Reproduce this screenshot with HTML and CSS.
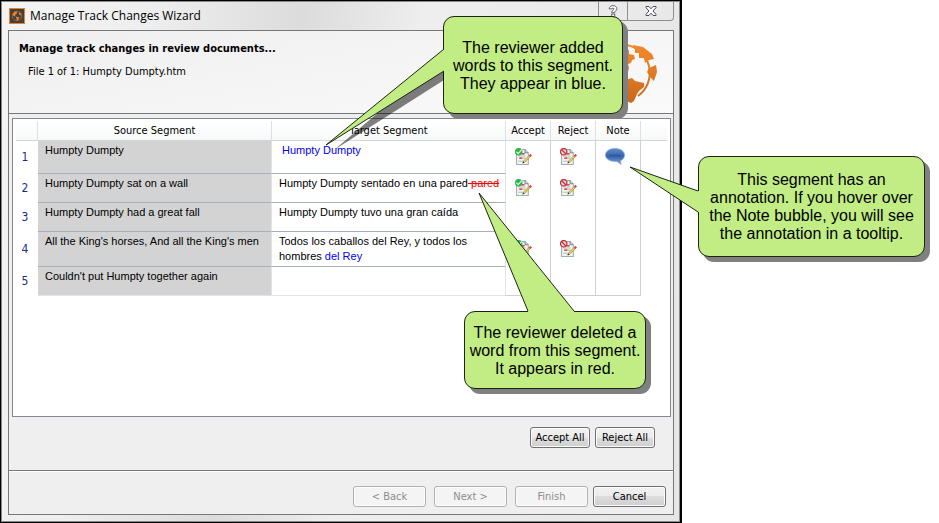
FILE: index.html
```html
<!DOCTYPE html>
<html lang="en">
<head>
<meta charset="utf-8">
<title>Manage Track Changes Wizard</title>
<link rel="stylesheet" href="styles.css">
</head>
<body>
<svg class="defs" aria-hidden="true">
  <defs>
    <linearGradient id="orange" gradientUnits="userSpaceOnUse" x1="0" y1="0" x2="0" y2="60"><stop offset="0" stop-color="#f58a2b"/><stop offset="1" stop-color="#c9691c"/></linearGradient>
    <linearGradient id="blue" x1="0" y1="0" x2="0" y2="1"><stop offset="0" stop-color="#5f8cc9"/><stop offset=".5" stop-color="#3764ad"/><stop offset="1" stop-color="#7ba3dc"/></linearGradient>
    <symbol id="doc" viewBox="0 0 16 16">
      <path d="M1.500 1.500h8l3 3v11h-11z" fill="#f1f6f6" stroke="#9eaeb1"/>
      <path d="M9.500 1.500v3h3" fill="#cfd9da" stroke="#7b8b8e"/>
      <path d="M6 5.500h3M4 9.500h3" stroke="#e80d0d"/>
      <path d="M7 9.500h3M3 7.500h7M3 12.500h5" stroke="#b3bfc0"/>
      <path d="M7.500 14l.6-1.800 5-5 1.200 1.200-5 5z" fill="#f1cf4a" stroke="#8b7226" stroke-width=".5"/>
      <path d="M13 7l1.400-1.500 1.600 1.500-1.500 1.500z" fill="#d7474c"/>
      <path d="M7 14.500l.6-1.700 1.100 1.100z" fill="#222"/>
    </symbol>
    <symbol id="accept" viewBox="0 0 16 16">
      <use href="#doc"/>
      <circle cx="3.500" cy="3.500" r="3.500" fill="#2cb44c"/>
      <path d="M1.300 3.600l1.700 1.700 3.500-4" fill="none" stroke="#d9f7dd" stroke-width="1.200"/>
    </symbol>
    <symbol id="reject" viewBox="0 0 16 16">
      <use href="#doc"/>
      <circle cx="3.500" cy="3.500" r="3" fill="#f7dede" stroke="#c03339" stroke-width="1.200"/>
      <path d="M1.400 1.400l4.200 4.200" stroke="#c03339" stroke-width="1.200"/>
    </symbol>
  </defs>
</svg>
<main class="stage">
  <section class="window">
    <header class="titlebar">
      <svg class="app-icon" viewBox="0 0 16 16" aria-hidden="true">
        <rect x=".5" y=".5" width="15" height="15" fill="#414042" stroke="#f08020"/>
        <circle cx="8" cy="8" r="4.700" fill="none" stroke="#b9661f" stroke-width=".8"/>
        <path d="M3.500 6l2-2.500 3 .5-1 2-1.500 1 .5 1.500-2-.5zM10 4l2.500 2-.5 1.500-2-1zM7 8.500l3.500 1-1 2-1.500 1.500-.5-2z" fill="#f08020"/>
      </svg>
      <h1>Manage Track Changes Wizard</h1>
      <div class="captions">
        <button class="cap-help" aria-label="Help"><svg viewBox="0 0 12 14"><path d="M1.500 4.500c0-5 9-5 9 0 0 2-2.500 2.500-2.500 4.500H4.500c0-3 2.500-3 2.500-4.500 0-1.300-2-1.300-2 0zM4.500 10.500H8v3H4.500z" fill="#fff" stroke="#4b4d58"/></svg></button>
        <button class="cap-close" aria-label="Close"><svg viewBox="0 0 12 12"><path d="M1 1.500h3l2 2.300 2-2.300h3v1.200L8 6l3 3.300v1.200H8L6 8.200 4 10.500H1V9.300L4 6 1 2.700z" fill="#fff" stroke="#4b4d58"/></svg></button>
      </div>
    </header>
    <div class="client">
      <div class="banner">
        <div>
          <h2>Manage track changes in review documents...</h2>
          <p>File 1 of 1: Humpty Dumpty.htm</p>
        </div>
        <svg class="globe" viewBox="0 0 60 60" aria-hidden="true">
          <path d="M29 2A28.500 28.500 0 0 1 40 53" fill="none" stroke="url(#orange)" stroke-width="2"/>
          <path d="M30 2A28.500 28.500 0 0 0 26 58" fill="none" stroke="url(#orange)" stroke-width="2"/>
          <path d="M8 14L18 6l13 1v4l5 1 1 4-3 1-1 3-3 1 1 4-1 4-3 2-9-1-8-8z" fill="url(#orange)"/>
          <path d="M35 2l10 2 9 7 2 5-5 1-4 3-1-5h-5v-5h-4V6z" fill="url(#orange)"/>
          <path d="M51 25l7-3 1 7-3 9-4-4-3-5z" fill="url(#orange)"/>
          <path d="M27 37l7-2 3 3 9 2v4l-5 4-2 3-3 7-3 2-5-2 2-6-4-7z" fill="url(#orange)"/>
        </svg>
      </div>
      <div class="body">
        <div class="grid-panel">
          <table>
            <colgroup><col class="c-num"><col><col><col class="c-act"><col class="c-act"><col class="c-act"><col class="c-rest"></colgroup>
            <thead>
              <tr><th></th><th>Source Segment</th><th>Target Segment</th><th>Accept</th><th>Reject</th><th>Note</th><th></th></tr>
            </thead>
            <tbody>
              <tr class="tall">
                <th>1</th><td class="src">Humpty Dumpty</td><td class="tgt"><ins class="indent">Humpty Dumpty</ins></td>
                <td class="act"><svg><use href="#accept"/></svg></td><td class="act"><svg><use href="#reject"/></svg></td>
                <td class="act"><svg class="note" viewBox="0 0 20 17"><path d="M10 .5c5.500 0 9.500 2.800 9.500 6.500 0 2.600-1.500 4.700-4 5.800l.5 3.700-4-3.100C5 13.800.5 11 .5 7 .5 3.300 4.500.5 10 .5z" fill="url(#blue)" stroke="#87a6d3" stroke-width=".8"/><path d="M4 6.500h12v2H4z" fill="#2c5296" opacity=".6"/></svg></td><td></td>
              </tr>
              <tr>
                <th>2</th><td class="src">Humpty Dumpty sat on a wall</td><td class="tgt">Humpty Dumpty sentado en una pared<del> pared</del></td>
                <td class="act"><svg><use href="#accept"/></svg></td><td class="act"><svg><use href="#reject"/></svg></td><td class="act"></td><td></td>
              </tr>
              <tr>
                <th>3</th><td class="src">Humpty Dumpty had a great fall</td><td class="tgt">Humpty Dumpty tuvo una gran caída</td>
                <td class="act"></td><td class="act"></td><td class="act"></td><td></td>
              </tr>
              <tr class="two-line">
                <th>4</th><td class="src">All the King's horses, And all the King's men</td><td class="tgt">Todos los caballos del Rey, y todos los hombres <ins>del Rey</ins></td>
                <td class="act"><svg><use href="#accept"/></svg></td><td class="act"><svg><use href="#reject"/></svg></td><td class="act"></td><td></td>
              </tr>
              <tr class="last">
                <th>5</th><td class="src">Couldn't put Humpty together again</td><td class="tgt"></td>
                <td class="act"></td><td class="act"></td><td class="act"></td><td></td>
              </tr>
            </tbody>
          </table>
        </div>
        <div class="bulk"><button>Accept All</button><button>Reject All</button></div>
      </div>
      <footer class="nav">
        <button disabled>&lt; Back</button><button disabled>Next &gt;</button><button disabled>Finish</button><button class="cancel">Cancel</button>
      </footer>
    </div>
  </section>

  <aside class="callout added">
    <svg class="tail" viewBox="0 0 120 100" aria-hidden="true">
      <path d="M118 10L8 103l110-70z" class="tail-shadow"/>
      <path d="M120 2H118L0 98 118 24h2z" class="tail-fill"/><path d="M118 2L0 98 118 24" class="tail-line"/>
    </svg>
    <p>The reviewer added<br>words to this segment.<br>They appear in blue.</p>
  </aside>
  <aside class="callout deleted">
    <svg class="tail" viewBox="0 0 96 120" aria-hidden="true">
      <path d="M49 120v-2L0 0l95 118v2z" class="tail-fill"/><path d="M49 118L0 0l95 118" class="tail-line"/>
    </svg>
    <p>The reviewer deleted a<br>word from this segment.<br>It appears in red.</p>
  </aside>
  <aside class="callout annotation">
    <svg class="tail" viewBox="0 0 70 46" aria-hidden="true">
      <path d="M70 24h-2L0 0l68 45h2z" class="tail-fill"/><path d="M68 24L0 0l68 45" class="tail-line"/>
    </svg>
    <p>This segment has an<br>annotation. If you hover over<br>the Note bubble, you will see<br>the annotation in a tooltip.</p>
  </aside>
</main>
</body>
</html>
```
FILE: styles.css
```css
* { box-sizing: border-box; }

body {
  margin: 0;
  background: #fff;
  color: #000;
  font: 11px/15px "DejaVu Sans Condensed", sans-serif;
}

h1, h2, p { margin: 0; }

.defs { position: absolute; width: 0; height: 0; }

.stage {
  position: relative;
  display: flex;
  min-height: 100vh;
  padding-right: 257px;
}

/* Window frame */
.window {
  flex: 1;
  display: flex;
  flex-direction: column;
  padding: 0 6px 7px 7px;
  border: 1px solid #000;
  border-width: 1px 2px 1px 1px;
  box-shadow: inset 0 0 0 1px #8a8a8a;
  background: linear-gradient(100deg, #f4f4f4 0, #eee 150px, #dcdcdc 300px, #eee 420px, #e6e6e6 100%);
}

.titlebar {
  display: flex;
  align-items: center;
  gap: 5px;
  height: 29px;
  padding-left: 1px;
}

.titlebar h1 {
  flex: 1;
  font: 12px/16px "Open Sans", "Noto Sans", sans-serif;
}

.app-icon { width: 16px; height: 16px; }

.captions {
  display: flex;
  align-self: flex-start;
  height: 20px;
  border: 1px solid #8f8f8f;
  border-top: 0;
  border-radius: 0 0 4px 4px;
}

.captions button {
  display: flex;
  align-items: center;
  justify-content: center;
  width: 28px;
  padding: 0;
  border: 0;
  background: none;
}

.captions .cap-close { width: 46px; border-left: 1px solid #8f8f8f; }
.captions svg { width: 12px; height: 12px; }

.client {
  flex: 1;
  display: flex;
  flex-direction: column;
  border: 1px solid #76787b;
  background: #efefef;
}

.banner {
  display: flex;
  justify-content: space-between;
  height: 83px;
  padding: 10px 15px 0 10px;
  border-bottom: 1px solid #76787b;
  background: linear-gradient(170deg, #efefef, #fafafa);
}

.banner h2 { font-size: 11px; line-height: 15px; }
.banner p { padding: 8px 0 0 9px; }
.globe { width: 60px; height: 60px; margin-top: 2px; }

.body {
  flex: 1;
  display: flex;
  flex-direction: column;
  padding: 4px 2px 0 3px;
}

/* Segment table */
.grid-panel {
  height: 299px;
  padding: 2px 3px;
  border: 1px solid #828790;
  background: #fff;
}

table {
  width: 100%;
  table-layout: fixed;
  border-collapse: separate;
  border-spacing: 0;
}

.c-num { width: 22px; }
.c-act { width: 45px; }
.c-rest { width: 26px; }

th, td { padding: 0; font-weight: normal; }

thead th {
  height: 20px;
  border-right: 1px solid #dfe0e2;
  border-bottom: 1px solid #d5d5d5;
  background: linear-gradient(#fff, #f7f8f9);
}

thead th:last-child { border-right: 0; }

tbody tr { height: 29px; }
tbody tr.tall { height: 33px; }
tbody tr.two-line { height: 35px; }

tbody th {
  padding: 0 4px 0 0;
  color: #1c2c86;
  font-size: 12px;
}

.src, .tgt {
  padding: 2px 3px 0 7px;
  border-right: 1px solid #dfe3ea;
  border-bottom: 1px solid #a9afb9;
  font: 11px/15px "Liberation Sans", Arial, sans-serif;
  vertical-align: top;
}

.src { background: #d3d3d3; }
.last .src, .last .tgt { border-bottom-color: #dfe3ea; }

ins { color: #00f; text-decoration: none; }
.indent { padding-left: 3px; }
del { color: #f00; }

.act {
  padding: 0 0 2px 9px;
  border-right: 1px solid #d0d0d0;
  vertical-align: middle;
}

.last .act { border-bottom: 1px solid #d0d0d0; }
.act svg { display: block; width: 17px; height: 17px; }
.act .note { width: 20px; }

/* Buttons */
.bulk {
  display: flex;
  justify-content: flex-end;
  gap: 5px;
  padding: 10px 16px 0 0;
}

.bulk button, .nav button {
  height: 21px;
  padding: 0;
  border: 1px solid #707070;
  border-radius: 3px;
  box-shadow: inset 0 0 0 1px #fcfcfc;
  background: linear-gradient(#f2f2f2, #ebebeb 50%, #ddd 50%, #cfcfcf);
  color: #000;
  font: inherit;
}

.bulk button { width: 60px; }

.nav {
  display: flex;
  justify-content: flex-end;
  gap: 8px;
  height: 44px;
  padding: 15px 7px 0 0;
  border-top: 1px solid #76787b;
  box-shadow: inset 0 1px #fff;
}

.nav button { width: 73px; }

.nav button:disabled {
  border-color: #adb2b5;
  background: #f4f4f4;
  color: #8d8d8d;
}

.nav .cancel { margin-left: -3px; }

/* Callouts lie over the window */
.callout {
  position: absolute;
  display: flex;
  align-items: center;
  justify-content: center;
  border: 1px solid #1d2412;
  border-radius: 11px;
  background: #c2ed84;
  box-shadow: 5px 5px #808080;
  font: 16px/18px "Liberation Sans", Arial, sans-serif;
  text-align: center;
  white-space: nowrap;
}

.tail { position: absolute; overflow: visible; }
.tail-shadow { fill: #000; fill-opacity: .5; }
.tail-fill { fill: #c2ed84; }
.tail-line { fill: none; stroke: #1d2412; }

.added { left: 443px; top: 16px; width: 180px; height: 98px; padding-top: 2px; }
.added .tail { left: -118px; top: 30px; width: 120px; height: 100px; }

.deleted { left: 464px; top: 311px; width: 182px; height: 78px; padding-top: 2px; }
.deleted .tail { left: 14px; top: -119px; width: 96px; height: 120px; }

.annotation { left: 698px; top: 156px; width: 227px; height: 101px; }
.annotation .tail { left: -69px; top: 10px; width: 70px; height: 46px; }
```
